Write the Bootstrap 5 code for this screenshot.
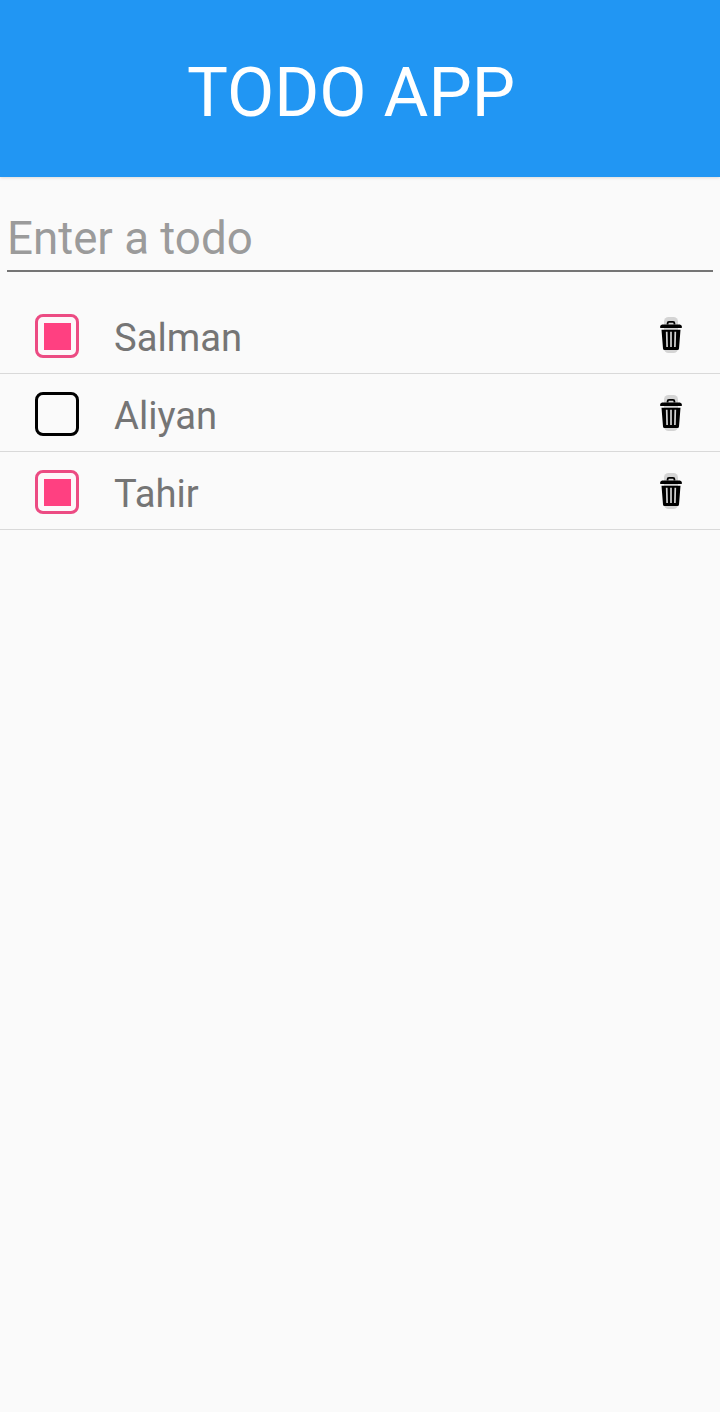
<!DOCTYPE html>
<html lang="en">
<head>
<meta charset="utf-8">
<meta name="viewport" content="width=device-width, initial-scale=1">
<title>Todo App</title>
<link href="https://cdn.jsdelivr.net/npm/bootstrap@5.3.0/dist/css/bootstrap.min.css" rel="stylesheet">
<style>
body{background:#fafafa;font-family:Roboto,sans-serif;min-height:100vh}
.app-header{height:177px;background:#2196f3;box-shadow:0 1px 3px rgba(0,0,0,.13);padding:0 18px 0 0}
.app-header h1{font-size:68.7px;line-height:80px;font-weight:400;margin:9px 0 0;color:#fff}
.todo-entry{margin:31px 7px 0}
.todo-entry .form-control{height:64px;font-size:45.7px;line-height:60px;padding:0 0 1px;color:#757575;border-bottom:2px solid #757575!important}
.todo-entry .form-control::placeholder{color:#9b9b9b;opacity:1}
.todo-list{margin-top:24px}
.todo-row{height:78px;padding:3px 36px 0 35px;border-bottom:1px solid #d9d9d9}
.todo-check{width:44px;height:44px;border:3px solid #000;border-radius:8px;padding:6px}
.todo-check.checked{border-color:#ec4b83;background:#fdf7fa}
.todo-check.checked::before{content:"";display:block;width:27px;height:27px;background:#ff4081}
.todo-name{font-size:38.2px;line-height:46px;color:#757575;margin:4px 0 0 35px}
.trash-icon{margin-bottom:3px}
</style>
</head>
<body>
<svg class="d-none">
  <symbol id="trash" viewBox="0 0 26 38">
    <rect x="6" y="1" width="14" height="36" rx="4.5" fill="#d4d4d4"/>
    <path d="M9.600 8.500V7.300Q9.600 5.900 11 5.900h4q1.400 0 1.400 1.400v1.200" fill="none" stroke="#000" stroke-width="1.800"/>
    <path d="M4.200 8.500h17.600q2 .5 2 2v1.400H2.200v-1.400q0-1.500 2-2z"/>
    <path d="M3.500 13.700h19L21 32.400q-.1 1.500-1.500 1.500h-13Q5.100 33.900 5 32.400z"/>
    <path d="M8.700 15.800l.4 15.200M13 15.800v15.200M17.300 15.800l-.4 15.200" fill="none" stroke="#d4d4d4" stroke-width="1.700"/>
  </symbol>
</svg>
<header class="app-header d-flex align-items-center justify-content-center"><h1>TODO APP</h1></header>
<main>
  <form class="todo-entry"><input class="form-control border-0 rounded-0 bg-transparent shadow-none" type="text" placeholder="Enter a todo" aria-label="Enter a todo"></form>
  <ul class="todo-list list-unstyled mb-0">
    <li class="todo-row d-flex align-items-center"><span class="todo-check checked"></span><span class="todo-name">Salman</span><svg class="trash-icon ms-auto" width="26" height="38"><use href="#trash"/></svg></li>
    <li class="todo-row d-flex align-items-center"><span class="todo-check"></span><span class="todo-name">Aliyan</span><svg class="trash-icon ms-auto" width="26" height="38"><use href="#trash"/></svg></li>
    <li class="todo-row d-flex align-items-center"><span class="todo-check checked"></span><span class="todo-name">Tahir</span><svg class="trash-icon ms-auto" width="26" height="38"><use href="#trash"/></svg></li>
  </ul>
</main>
<script src="https://cdn.jsdelivr.net/npm/bootstrap@5.3.0/dist/js/bootstrap.bundle.min.js"></script>
</body>
</html>
